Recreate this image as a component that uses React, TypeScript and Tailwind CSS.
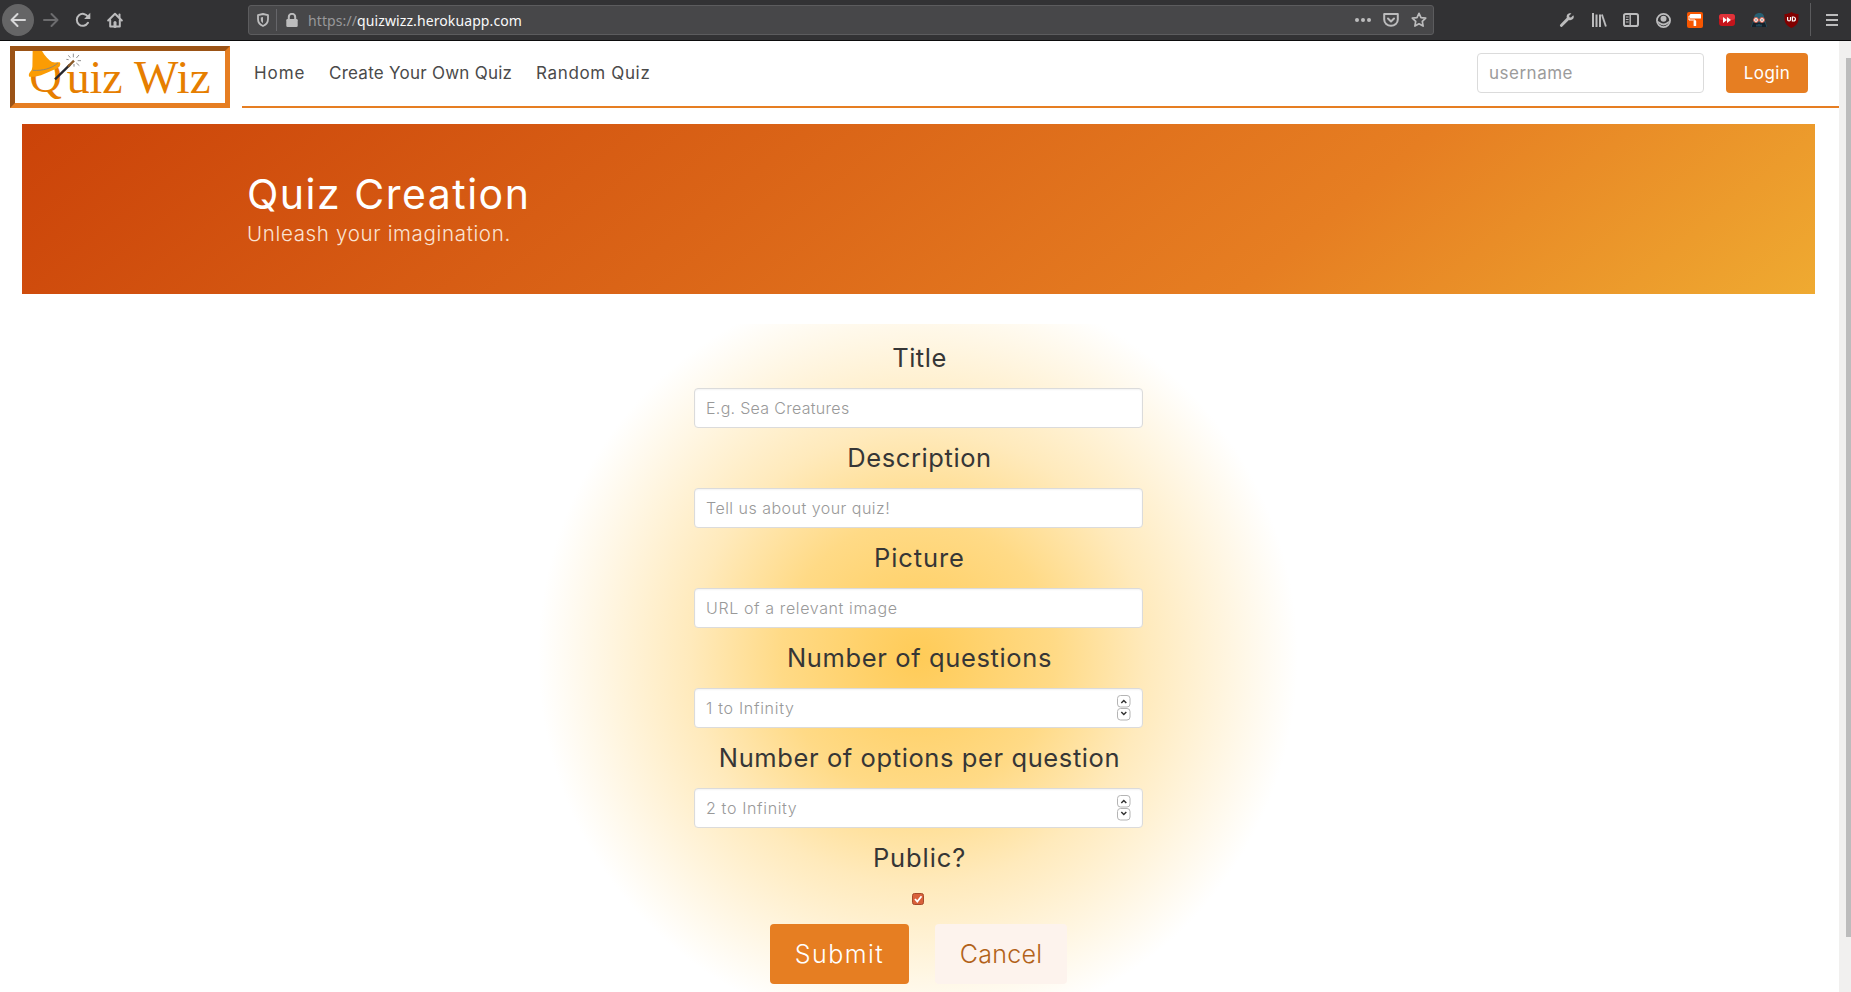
import type { ReactNode } from "react";

const sans = "font-['Inter','Liberation_Sans',sans-serif]";

function Cell({ children, className = "" }: { children: ReactNode; className?: string }) {
  return <div className={`flex h-8 w-8 shrink-0 items-center justify-center ${className}`}>{children}</div>;
}

function Svg({ children, size = 16 }: { children: ReactNode; size?: number }) {
  return (
    <svg width={size} height={size} viewBox="0 0 16 16" fill="none" stroke="currentColor" strokeWidth="2" strokeLinecap="round" strokeLinejoin="round">
      {children}
    </svg>
  );
}

function Toolbar() {
  return (
    <header className="flex h-[41px] items-start border-b border-[#0c0c0d] bg-[#323234] pt-1 text-[#bcbcbd]">
      <Cell className="ml-0.5 rounded-full bg-[#656566] text-[#d8d8d9]">
        <Svg><path d="M15 8H1.5M7.5 2L1.5 8l6 6" /></Svg>
      </Cell>
      <Cell className="ml-px text-[#6c6c6e]">
        <Svg><path d="M1 8h13.5M8.500 2l6 6-6 6" /></Svg>
      </Cell>
      <Cell>
        <Svg><path d="M13 10.800A6 6 0 1 1 13 4.800" /><path d="M15.300.8v6.200H9.100z" fill="currentColor" stroke="none" /></Svg>
      </Cell>
      <Cell>
        <Svg>
          <path d="M1.200 8.500L8 1.700l6.800 6.800" /><path d="M3.200 8v6.600h9.600V8" /><path d="M12.500 2.500v3" /><path d="M8 10.500v4" strokeWidth="3" />
        </Svg>
      </Cell>
      <div className="ml-[117px] mt-px flex h-[30px] w-[1186px] items-center rounded-[3px] border border-[#5c5c5e] bg-[#474749] pr-1.5 pl-2">
        <svg width="12" height="14" viewBox="0 0 12 14" fill="none" stroke="currentColor" strokeWidth="1.8">
          <path d="M6 1L11 2.200V6c0 3.600-2 5.800-5 7-3-1.200-5-3.400-5-7V2.200z" strokeLinejoin="round" /><path d="M6 4v6.200C4.300 9.200 3.800 7.800 3.800 6V4.500z" fill="currentColor" stroke="none" />
        </svg>
        <div className="ml-[7px] h-[22px] w-px bg-[#66666a]" />
        <svg className="ml-[9px]" width="12" height="14" viewBox="0 0 12 14">
          <rect x="0.300" y="6" width="11.400" height="8" rx="1.300" fill="currentColor" /><path d="M2.800 7V4a3.200 3.200 0 0 1 6.400 0v3" fill="none" stroke="currentColor" strokeWidth="2" />
        </svg>
        <div className="mt-px ml-2.5 font-['Noto_Sans',sans-serif] text-[14px] leading-5 tracking-[0.1px] text-[#f9f9fa]">
          <span className="text-[#98989a]">https://</span>quizwizz.herokuapp.com
        </div>
        <div className="ml-auto flex items-center gap-3">
          <svg width="16" height="4" viewBox="0 0 16 4" fill="currentColor"><circle cx="2" cy="2" r="2" /><circle cx="8" cy="2" r="2" /><circle cx="14" cy="2" r="2" /></svg>
          <Svg><path d="M1.200 2h13.600v5.500a6.800 6.300 0 0 1-13.600 0z" /><path d="M5 6.500l3 3 3-3" /></Svg>
          <Svg><path d="M8 1.300l2 4.300 4.700.6-3.400 3.200.8 4.700L8 11.800l-4.100 2.300.8-4.700L1.300 6.200 6 5.600z" strokeWidth="1.700" /></Svg>
        </div>
      </div>
      <div className="ml-[117px] flex">
        <Cell>
          <svg width="16" height="16" viewBox="0 0 16 16" fill="currentColor">
            <path d="M14.300 3.300l-2.300 2.200-1.500-.3-.4-1.500L12.400 1.400C10.700.8 8.800 1.500 8 3c-.5 1-.5 1.900-.2 2.800L1.300 12.600a1.300 1.300 0 0 0 2 1.900L9.900 8c1.500.5 3 .1 4-.9s1.200-2.600.4-3.800z" />
          </svg>
        </Cell>
        <Cell><Svg><path d="M2 1v14M5.500 2.500V15M9 2.500V15" strokeWidth="2" strokeLinecap="butt" /><path d="M10.900 2.500l4 12" strokeWidth="1.900" strokeLinecap="butt" /></Svg></Cell>
        <Cell><Svg><rect x="1" y="2" width="14" height="12" rx="1.800" /><path d="M7.200 2v12" strokeWidth="1.400" /><path d="M3.200 5h2M3.200 7.500h2M3.200 10h2" strokeWidth="1" /></Svg></Cell>
        <Cell>
          <svg width="15" height="15" viewBox="0 0 16 16">
            <circle cx="8" cy="8" r="7" fill="none" stroke="currentColor" strokeWidth="1.900" />
            <circle cx="8" cy="6" r="3.200" fill="currentColor" />
            <path d="M1.500 8.500c1.200 0 2.200 1 3.200 1.700 2 1.200 4.600 1.200 6.600 0 1-.7 2-1.700 3.200-1.700-.3 1.500-1.300 2.500-2.300 3.300-2.400 1.900-6 1.900-8.400 0-1-.8-2-1.800-2.300-3.300z" fill="currentColor" />
          </svg>
        </Cell>
        <Cell>
          <svg width="16" height="16" viewBox="0 0 16 16"><rect width="16" height="16" rx="2" fill="#f75600" /><rect x="3" y="2" width="11" height="4.500" rx=".6" fill="#fff" /><path d="M3 4H2v4h6v1.500" fill="none" stroke="#fff" /><rect x="6.600" y="8.500" width="2.600" height="5.500" rx=".5" fill="#fff" /></svg>
        </Cell>
        <Cell>
          <svg width="16" height="12" viewBox="0 0 16 12"><rect width="16" height="12" rx="3" fill="#c4141b" /><rect width="16" height="6" rx="3" fill="#e0333a" /><path d="M4 3l4 3-4 3zM8 3l4 3-4 3z" fill="#fff" /></svg>
        </Cell>
        <Cell>
          <svg width="16" height="16" viewBox="0 0 16 16"><path d="M3 7C3 3 5 1 8.500 1S13 3 13.500 7l2.500 8H0z" fill="#275f72" /><path d="M2 10.500h12L15.500 15H.5z" fill="#13202a" /><circle cx="5" cy="8" r="2.400" fill="#fff" stroke="#e2553d" /><circle cx="11" cy="8" r="2.400" fill="#fff" stroke="#e2553d" /><circle cx="5" cy="8" r=".7" fill="#333" /><circle cx="11" cy="8" r=".7" fill="#333" /><path d="M6 12.500v2M8 12v2.500M10 12.500v2" stroke="#2f6a80" /></svg>
        </Cell>
        <Cell>
          <svg width="15" height="16" viewBox="0 0 15 16"><path d="M7.500 0c2.300 1.500 4.500 2 7 2v5c0 4.500-3 7-7 9-4-2-7-4.500-7-9V2c2.500 0 4.700-.5 7-2z" fill="#800000" /><path d="M3.600 5v2.500a1.400 1.400 0 0 0 2.900 0V5M8.400 5v4h1a2 2 0 0 0 0-4z" fill="none" stroke="#fff" strokeWidth="1.200" /></svg>
        </Cell>
      </div>
      <div className="-mt-px ml-[3px] h-[33px] w-px bg-[#5b5b5d]" />
      <Cell className="ml-[5px]">
        <svg width="12" height="12" viewBox="0 0 12 12" fill="currentColor"><path d="M0 0h12v2H0zM0 5h12v2H0zM0 10h12v2H0z" /></svg>
      </Cell>
    </header>
  );
}

function Logo() {
  return (
    <div className="ml-2.5 mt-[5px] h-[62px] w-[220px] shrink-0 border-[5px] border-t-[#9b5316] border-r-[#e67e22] border-b-[#e67e22] border-l-[#9b5316]">
      <svg width="210" height="52" viewBox="45 48 630 156" fontFamily="'Liberation Serif', serif" fontSize="142" fill="#e67e00">
        <text x="88" y="170" textLength="98" lengthAdjust="spacingAndGlyphs">Q</text>
        <text x="200" y="173" textLength="168" lengthAdjust="spacingAndGlyphs">uiz</text>
        <text x="402" y="173" textLength="230" lengthAdjust="spacingAndGlyphs">Wiz</text>
        <path d="M98 46h27c8 15 20 28 32 36 8 1 16 0 22 0 4 4 1 10-2 14-12 8-28 14-45 21-14 6-30 10-44 8-4-6 0-14 9-21z" fill="#fb9c04" />
        <path d="M98 106c30 2 58-6 76-22" fill="none" stroke="#98876b" strokeWidth="3" />
        <path d="M165 133l45-44" stroke="#26262c" strokeWidth="7" />
        <path d="M204 95l18-18" stroke="#8a5a28" strokeWidth="7" />
        <path d="M220 67v-11M229 69l8-9M233 77h10M229 84l9 8M222 87v8M211 68l-6-7M206 74l-7-1" stroke="#777" strokeWidth="2.500" />
      </svg>
    </div>
  );
}

function Label({ text, track }: { text: string; track: string }) {
  return <div className={`flex h-[60px] shrink-0 items-center pt-px pl-[3px] text-[25.5px] whitespace-nowrap text-[#363636] ${track}`}>{text}</div>;
}

function Field({ label, hint, labelTrack, hintTrack, stepper }: { label: string; hint: string; labelTrack: string; hintTrack: string; stepper?: boolean }) {
  return (
    <div className="flex h-[100px] shrink-0 flex-col items-center">
      <Label text={label} track={labelTrack} />
      <div className="flex h-10 w-[449px] items-center justify-between rounded-[4px] border border-[#dbdbdb] bg-white pr-[11px] pl-[11.5px] shadow-[inset_0_1px_2px_rgba(10,10,10,0.05)]">
        <span className={`text-[16px] font-light text-[#999999] ${hintTrack}`}>{hint}</span>
        {stepper && (
          <svg width="14" height="26" viewBox="0 0 14 26" fill="none" stroke="#b4b4b4">
            <rect x=".5" y=".5" width="12.500" height="11.500" rx="3" /><rect x=".5" y="13.500" width="12.500" height="11.500" rx="3" />
            <path d="M4.300 8l2.500-2.500L9.300 8M4.300 17l2.500 2.500L9.300 17" stroke="#333" strokeWidth="1.500" />
          </svg>
        )}
      </div>
    </div>
  );
}

export default function App() {
  return (
    <div className={`flex h-[992px] w-[1851px] flex-col overflow-hidden bg-white ${sans}`}>
      <Toolbar />
      <div className="flex min-h-0 flex-1">
        <main className="flex w-[1839px] flex-col">
          <div className="flex h-[67px]">
            <Logo />
            <nav className="ml-3 flex flex-1 items-center border-b-2 border-[#e67e22] pl-3 pb-px text-[17px] whitespace-nowrap text-[#4a4a4a]">
              <span className="w-[75px] pt-0.5 tracking-[0.9px]">Home</span>
              <span className="w-[207px] pt-0.5 tracking-[0.25px]">Create Your Own Quiz</span>
              <span className="pt-0.5 tracking-[0.65px]">Random Quiz</span>
              <div className="ml-auto flex h-10 w-[227px] items-center rounded-[4px] border border-[#dbdbdb] pt-0.5 pl-[11px] tracking-[0.5px] text-[#9b9b9b]">username</div>
              <div className="mr-[31px] ml-[22px] flex h-10 w-[82px] items-center justify-center rounded-[4px] bg-[#e67e22] pt-0.5 tracking-[0.4px] text-white">Login</div>
            </nav>
          </div>
          <section className="mt-4 ml-[22px] flex h-[170px] w-[1793px] shrink-0 flex-col justify-center bg-[linear-gradient(141deg,#cb4309_0%,#e67e22_71%,#efaa31_100%)] pt-[3px] pl-[225px] text-white">
            <h1 className="text-[41px] leading-[46px] tracking-[1.500px]">Quiz Creation</h1>
            <p className="text-[20.5px] leading-[33px] font-light tracking-[0.660px] text-[#fae3d3]">Unleash your imagination.</p>
          </section>
          <section className="mt-[30px] flex min-h-0 flex-1 flex-col items-center bg-[radial-gradient(circle_380px_at_918px_333px,#ffcb57_0%,#ffda86_36%,#ffeabc_60%,#ffffff_100%)] pt-1 pr-[3px]">
            <Field label="Title" hint="E.g. Sea Creatures" labelTrack="tracking-[0.5px]" hintTrack="tracking-[0.3px]" />
            <Field label="Description" hint="Tell us about your quiz!" labelTrack="tracking-[0.6px]" hintTrack="tracking-[0.48px]" />
            <Field label="Picture" hint="URL of a relevant image" labelTrack="tracking-[0.9px]" hintTrack="tracking-[0.62px]" />
            <Field label="Number of questions" hint="1 to Infinity" labelTrack="tracking-[0.63px]" hintTrack="tracking-[0.7px]" stepper />
            <Field label="Number of options per question" hint="2 to Infinity" labelTrack="tracking-[0.6px]" hintTrack="tracking-[0.65px]" stepper />
            <Label text="Public?" track="tracking-[0.9px]" />
            <svg className="mt-[5px] shrink-0" width="12" height="12" viewBox="0 0 12 12"><rect x=".5" y=".5" width="11" height="11" rx="2" fill="#d9603a" stroke="#a64a2b" /><path d="M3 6l2.300 2.500L9.500 3.300" fill="none" stroke="#fff" strokeWidth="1.800" /></svg>
            <div className="mt-[19px] flex shrink-0 gap-[26px] text-[25px] font-light">
              <div className="flex h-[60px] w-[139px] items-center justify-center rounded-[4px] bg-[#e67e22] pt-0.5 pl-px tracking-[1.500px] text-white">Submit</div>
              <div className="flex h-[60px] w-[132px] items-center justify-center rounded-[4px] bg-[#fdf3ed] pt-0.5 pl-px tracking-[0.250px] text-[#b2621a]">Cancel</div>
            </div>
          </section>
        </main>
        <div className="flex w-3 justify-end bg-[#f1f0ef] pt-[17px]">
          <div className="h-[879px] w-[5px] bg-[#bcbcbc]" />
        </div>
      </div>
    </div>
  );
}
